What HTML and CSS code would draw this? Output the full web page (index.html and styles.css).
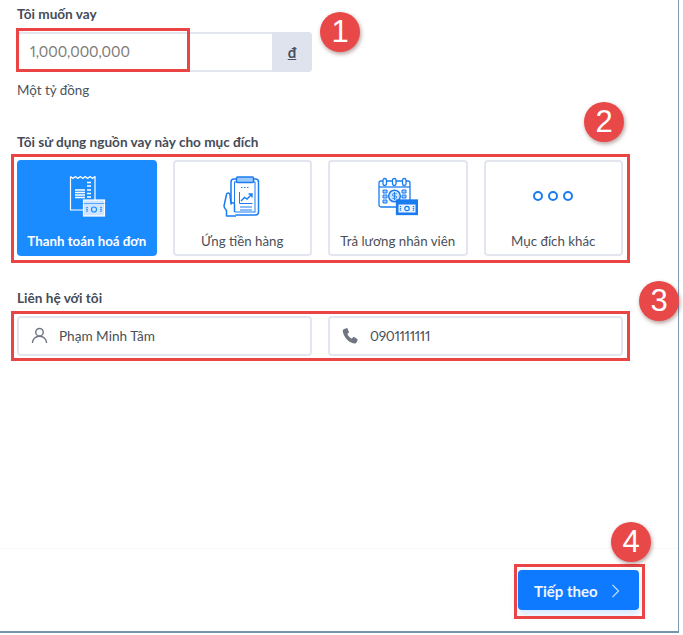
FILE: index.html
```html
<!DOCTYPE html>
<html lang="vi">
<head>
<meta charset="utf-8">
<title>Tôi muốn vay</title>
<link rel="stylesheet" href="styles.css">
</head>
<body>
<div class="panel">
  <main class="form">
    <section class="group-amount">
      <label class="label">Tôi muốn vay</label>
      <div class="amount">
        <span class="amount-value">1,000,000,000</span>
        <span class="amount-unit">đ</span>
      </div>
      <p class="hint">Một tỷ đồng</p>
    </section>
    <section class="group-purpose">
      <label class="label">Tôi sử dụng nguồn vay này cho mục đích</label>
      <div class="cards">
        <div class="card card-active">
          <svg class="card-icon" viewBox="0 0 40 44" fill="none" stroke="currentColor" stroke-width="1.200">
            <path d="M3.500 1.500V35H17M28 25V1.500l-2.450 2-2.450-2-2.450 2-2.450-2-2.450 2-2.450-2-2.450 2-2.450-2-2.450 2-2.450-2" stroke-linejoin="round"/>
            <path d="M8 15h10M8 17.500h10M8 20h10M8 22.500h10M20 7.500h4M20 11h4M20 15h4M20 18.500h4M20 22h4" stroke-width="1.300"/>
            <rect x="16.500" y="25" width="21" height="16" fill="#cfe4ff" stroke="#fff"/>
            <path d="M16.500 28.500h21" stroke="#1b8cff" stroke-width=".7"/>
            <circle cx="27" cy="34.500" r="2.500" stroke="#1b8cff" stroke-width="1.200"/>
            <path d="M20 32v5M34 32v5" stroke="#1b8cff" stroke-width="1.600" stroke-dasharray="1.300 .8"/>
          </svg>
          <span>Thanh toán hoá đơn</span>
        </div>
        <div class="card">
          <svg class="card-icon" viewBox="0 0 40 44" fill="none" stroke="currentColor" stroke-width="1.500">
            <rect x="9" y="4" width="27.500" height="36" rx="3"/>
            <rect x="12.500" y="7" width="20.500" height="30" stroke-width="1"/>
            <rect x="14.500" y="2" width="17" height="5.500" rx="1" fill="#9ccaff"/>
            <path d="M19 12.500h1.500M22 12.500h1.500M25 12.500h1.500" stroke-width="1.200"/>
            <path d="M17.500 17v11.500h13" stroke-width="1"/>
            <path d="M19 26l3.500-3.500 2.500 1.500 4.500-4.500M26.500 19h3.500v3.500" stroke-width="1.400"/>
            <path d="M18 32h12M18 35h12" stroke-width="1.200"/>
            <path d="M12.500 37v-7.500c0-2-3-2.500-3.500-.5l-1-9c-.3-2.500-3-2.500-3.500-.5L2 31c0 2 1 3 2.500 4.500V41h9.500" fill="#fff" stroke-linejoin="round"/>
          </svg>
          <span>Ứng tiền hàng</span>
        </div>
        <div class="card">
          <svg class="card-icon" viewBox="0 0 40 44" fill="none" stroke="currentColor" stroke-width="1.300">
            <rect x="1" y="6" width="31" height="26" rx="2"/>
            <path d="M1 12h31"/>
            <rect x="5" y="3.500" width="3.500" height="7" rx="1.700" fill="#fff"/>
            <rect x="14.500" y="3.500" width="3.500" height="7" rx="1.700" fill="#fff"/>
            <rect x="24.500" y="3.500" width="3.500" height="7" rx="1.700" fill="#fff"/>
            <circle cx="16.500" cy="21" r="5.800" fill="#cfe4ff" stroke-width="1.500"/>
            <path d="M5 15h4v3H5zM5 20h4v3H5zM5 25h4v3H5zM24 15h4v3h-4zM24 20h4v3h-4z" fill="#9ccaff" stroke-width="1"/>
            <path d="M18.500 18.700h-3c-1.500 0-1.500 2.300 0 2.300h2c1.500 0 1.500 2.300 0 2.300h-3M16.500 17v8" stroke-width=".9"/>
            <rect x="18.500" y="25" width="21" height="14.500" fill="#1b7cf0"/>
            <rect x="20.500" y="29.500" width="17" height="8" fill="#e8f2ff" stroke="none"/>
            <circle cx="29" cy="33.500" r="2.200" stroke-width="1.200"/>
            <path d="M22.500 31v5M35.500 31v5" stroke-width="1.400" stroke-dasharray="1.100 .7"/>
          </svg>
          <span>Trả lương nhân viên</span>
        </div>
        <div class="card">
          <div class="dots"><i></i><i></i><i></i></div>
          <span>Mục đích khác</span>
        </div>
      </div>
    </section>
    <section class="group-contact">
      <label class="label">Liên hệ với tôi</label>
      <div class="contacts">
        <div class="contact">
          <svg class="contact-icon" viewBox="0 0 18 18" fill="none" stroke="#6f7680" stroke-width="1.500">
            <circle cx="9" cy="5.500" r="4"/>
            <path d="M1.500 17c0-4 3-7.200 7.500-7.200s7.500 3.200 7.500 7.200"/>
          </svg>
          <span>Phạm Minh Tâm</span>
        </div>
        <div class="contact">
          <svg class="contact-icon" viewBox="0 0 18 18" fill="#6f7680">
            <path d="M4.600 1.200 1.800 2.300C.9 2.700.7 3.700.9 5c.6 3.300 2.300 6.200 4.600 8.500 2.300 2.200 4.800 3.700 7.500 4 1.200.2 2-.2 2.400-1l1.100-2.600c.2-.5 0-.9-.4-1.200l-3.300-2c-.4-.2-.8-.2-1.100.2l-1.400 1.500c-1.900-1-3.800-3-4.700-5l1.500-1.300c.4-.3.500-.8.200-1.200L5.800 1.500c-.3-.4-.8-.5-1.200-.3z"/>
          </svg>
          <span class="phone">0901111111</span>
        </div>
      </div>
    </section>
  </main>
  <footer class="footer">
    <button class="next" type="button"><span>Tiếp theo</span>
      <svg class="next-icon" viewBox="0 0 10 16" fill="none" stroke="#cfe4ff" stroke-width="1.300"><path d="M1.500 1l7 7-7 7"/></svg>
    </button>
  </footer>
</div>

<div class="mark mark-1"></div>
<div class="mark mark-2"></div>
<div class="mark mark-3"></div>
<div class="mark mark-4"></div>
<div class="badge badge-1">1</div>
<div class="badge badge-2">2</div>
<div class="badge badge-3">3</div>
<div class="badge badge-4">4</div>
</body>
</html>
```
FILE: styles.css
```css
* { box-sizing: border-box; }
html, body { margin: 0; padding: 0; background: #fff; }
body {
  position: relative;
  width: 683px;
  height: 635px;
  overflow: hidden;
  font-family: "Lato", "Noto Sans", sans-serif;
  font-variant-numeric: proportional-nums;
  color: #3c4350;
}
.panel {
  width: 679px;
  height: 633px;
  display: flex;
  flex-direction: column;
  border-right: 1px solid #7e9ab2;
  border-bottom: 2px solid #7396b0;
}
.form {
  flex: 1;
  padding: 5px 55px 0 17px;
}
.label {
  display: block;
  font-size: 13.600px;
  line-height: 18px;
  font-weight: 700;
  color: #454c59;
}
.amount {
  margin-top: 9px;
  width: 295px;
  height: 40px;
  display: flex;
  border: 2px solid #e4e6ef;
  border-radius: 4px;
}
.amount-value {
  flex: 1;
  padding-left: 11px;
  font-size: 14.400px;
  line-height: 36px;
  color: #7d7c78;
}
.amount-unit {
  width: 40px;
  margin: -2px -2px -2px 0;
  background: #dfe3ee;
  border-radius: 0 4px 4px 0;
  text-align: center;
  font-size: 15px;
  font-weight: 700;
  line-height: 40px;
  text-decoration: underline;
  color: #4a5060;
}
.hint {
  margin: 9px 0 0;
  font-size: 13.400px;
  line-height: 18px;
  color: #4d525b;
}
.group-purpose { margin-top: 34px; }
.cards {
  margin-top: 9px;
  display: grid;
  grid-template-columns: repeat(4, 1fr);
  column-gap: 16px;
}
.card {
  height: 96px;
  display: flex;
  flex-direction: column;
  align-items: center;
  padding-top: 13px;
  border: 2px solid #e4e6ef;
  border-radius: 4px;
  color: #1b7cf0;
  font-size: 13.300px;
}
.card span {
  margin-top: auto;
  padding-bottom: 4px;
  line-height: 18px;
  color: #4a4f58;
}
.card-active {
  background: #1b8cff;
  border-color: #1b8cff;
  color: #fff;
}
.card-active span { color: #fff; font-weight: 700; }
.card-icon { width: 40px; height: 44px; display: block; }
.dots {
  margin-top: 16px;
  display: flex;
  gap: 5px;
}
.dots i {
  width: 10px;
  height: 10px;
  border: 2px solid #1b7cf0;
  border-radius: 50%;
}
.group-contact { margin-top: 33px; }
.contacts {
  margin-top: 9px;
  display: grid;
  grid-template-columns: 295px 295px;
  column-gap: 16px;
}
.contact {
  height: 40px;
  display: flex;
  align-items: center;
  padding: 0 12px 1px;
  gap: 11px;
  border: 2px solid #e4e6ef;
  border-radius: 4px;
  font-size: 13.600px;
  color: #4a4f58;
}
.phone { letter-spacing: -.3px; }
.contact-icon { width: 17px; height: 17px; flex: none; }
.footer {
  height: 83px;
  display: flex;
  justify-content: flex-end;
  align-items: flex-start;
  padding: 21px 39px 0 0;
  border-top: 1px solid #f8f9fb;
}
.next {
  width: 121px;
  height: 40px;
  display: flex;
  align-items: center;
  padding: 1px 0 0 16px;
  gap: 13px;
  border: 0;
  border-radius: 4px;
  background: #0d7aff;
  color: #eef5ff;
  font: 700 15px "Lato", "Noto Sans", sans-serif;
  white-space: nowrap;
  box-shadow: 0 4px 10px rgba(13, 122, 255, .2);
}
.next-icon { width: 9px; height: 14px; flex: none; }
.mark {
  position: absolute;
  border: 3px solid #ea4444;
  pointer-events: none;
}
.mark-1 { left: 16px; top: 28px; width: 174px; height: 44px; }
.mark-2 { left: 11px; top: 154px; width: 619px; height: 109px; }
.mark-3 { left: 11px; top: 311px; width: 619px; height: 50px; }
.mark-4 { left: 514px; top: 564px; width: 131px; height: 55px; }
.badge {
  position: absolute;
  width: 40px;
  height: 40px;
  border-radius: 50%;
  background: #e94848;
  color: #fff;
  font: 400 31px/40px "Liberation Sans", Arial, sans-serif;
  text-align: center;
  box-shadow: 1px 2px 4px rgba(90, 30, 30, .45);
}
.badge-1 { left: 320px; top: 12px; }
.badge-2 { left: 584px; top: 102px; }
.badge-3 { left: 639px; top: 281px; }
.badge-4 { left: 611px; top: 522px; }
```
